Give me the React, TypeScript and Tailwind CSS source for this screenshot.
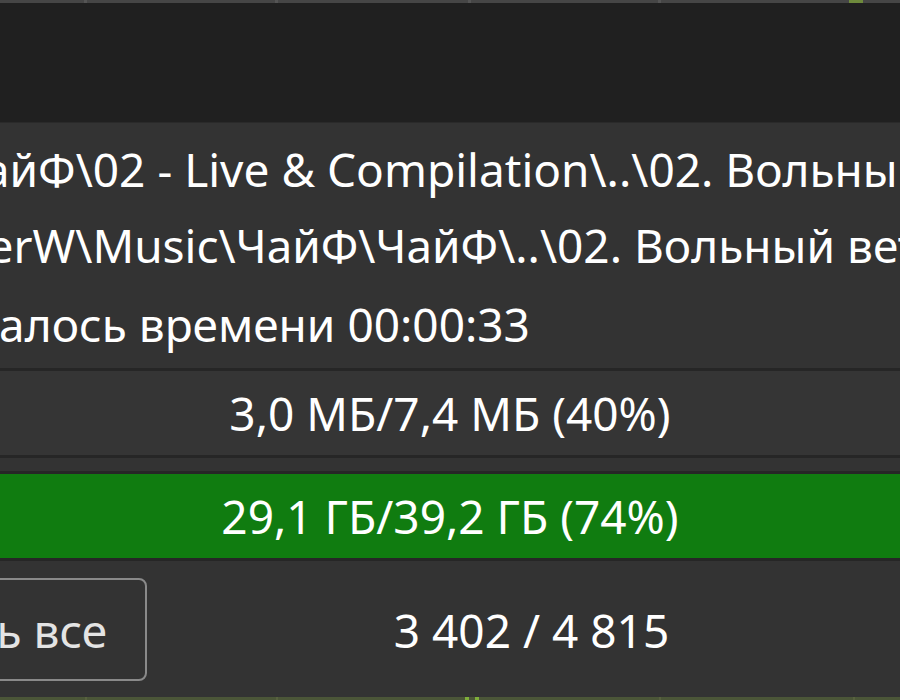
// Фрагмент окна копирования файлов (тёмная тема), увеличенный
export default function App() {
  return (
    <div
      className="flex h-[700px] w-[900px] flex-col overflow-hidden bg-[#202020] text-[46px] text-white"
      style={{ fontFamily: '"Noto Sans", "Open Sans", sans-serif' }}
    >
      {/* полоска панели задач сверху */}
      <div className="flex h-[3px] shrink-0 bg-[#464646]">
        <div className="w-[84px]" />
        <div className="w-[3px] bg-[#555555]" />
        <div className="w-[188px]" />
        <div className="w-[3px] bg-[#555555]" />
        <div className="w-[190px]" />
        <div className="w-[3px] bg-[#555555]" />
        <div className="w-[187px]" />
        <div className="w-[3px] bg-[#555555]" />
        <div className="w-[188px]" />
        <div className="w-[14px] bg-[#6e8a3c]" />
      </div>

      <div className="h-[119px] shrink-0 bg-[#202020]" />

      <div className="flex flex-1 flex-col border-t border-[#2a2a2a] bg-[#333333]">
        <div className="overflow-hidden whitespace-nowrap pt-[8px] leading-[76px]">
          <div className="ml-[-47px]">ЧайФ\02 - Live &amp; Compilation\..\02. Вольный ветер.mp3</div>
          <div className="ml-[-29px]">terW\Music\ЧайФ\ЧайФ\..\02. Вольный ветер.mp3</div>
          <div className="mt-[3px] ml-[-80px]">Осталось времени 00:00:33</div>
        </div>

        <div className="mt-[6px] flex h-[90px] items-center justify-center border-y-[3px] border-[#262626] bg-[#353535] leading-[76px]">
          3,0 МБ/7,4 МБ (40%)
        </div>

        <div className="mt-[13px] flex h-[90px] items-center justify-center border-y-[3px] border-[#262626] bg-[#107c10] leading-[76px]">
          29,1 ГБ/39,2 ГБ (74%)
        </div>

        <div className="mt-[17px] flex items-center">
          <div className="flex w-[147px] shrink-0 justify-end overflow-hidden">
            <button className="flex h-[103px] shrink-0 items-center rounded-[8px] border-2 border-[#8a8a8a] bg-[#333333] pl-[40px] pr-[38px] leading-[76px] text-[#e4e4e4]">
              Отменить все
            </button>
          </div>
          <div className="flex-1 pl-[16px] text-center leading-[76px]">3 402 / 4 815</div>
        </div>
      </div>

      {/* полоска снизу */}
      <div className="flex h-[3px] shrink-0 bg-[#4b5638]">
        <div className="w-[85px]" />
        <div className="w-[2px] bg-[#58623f]" />
        <div className="w-[189px]" />
        <div className="w-[2px] bg-[#58623f]" />
        <div className="w-[187px]" />
        <div className="w-[4px] bg-[#7fae3a]" />
        <div className="w-[6px]" />
        <div className="w-[4px] bg-[#7fae3a]" />
        <div className="w-[180px]" />
        <div className="w-[2px] bg-[#58623f]" />
        <div className="w-[192px]" />
        <div className="w-[2px] bg-[#58623f]" />
      </div>
    </div>
  );
}
